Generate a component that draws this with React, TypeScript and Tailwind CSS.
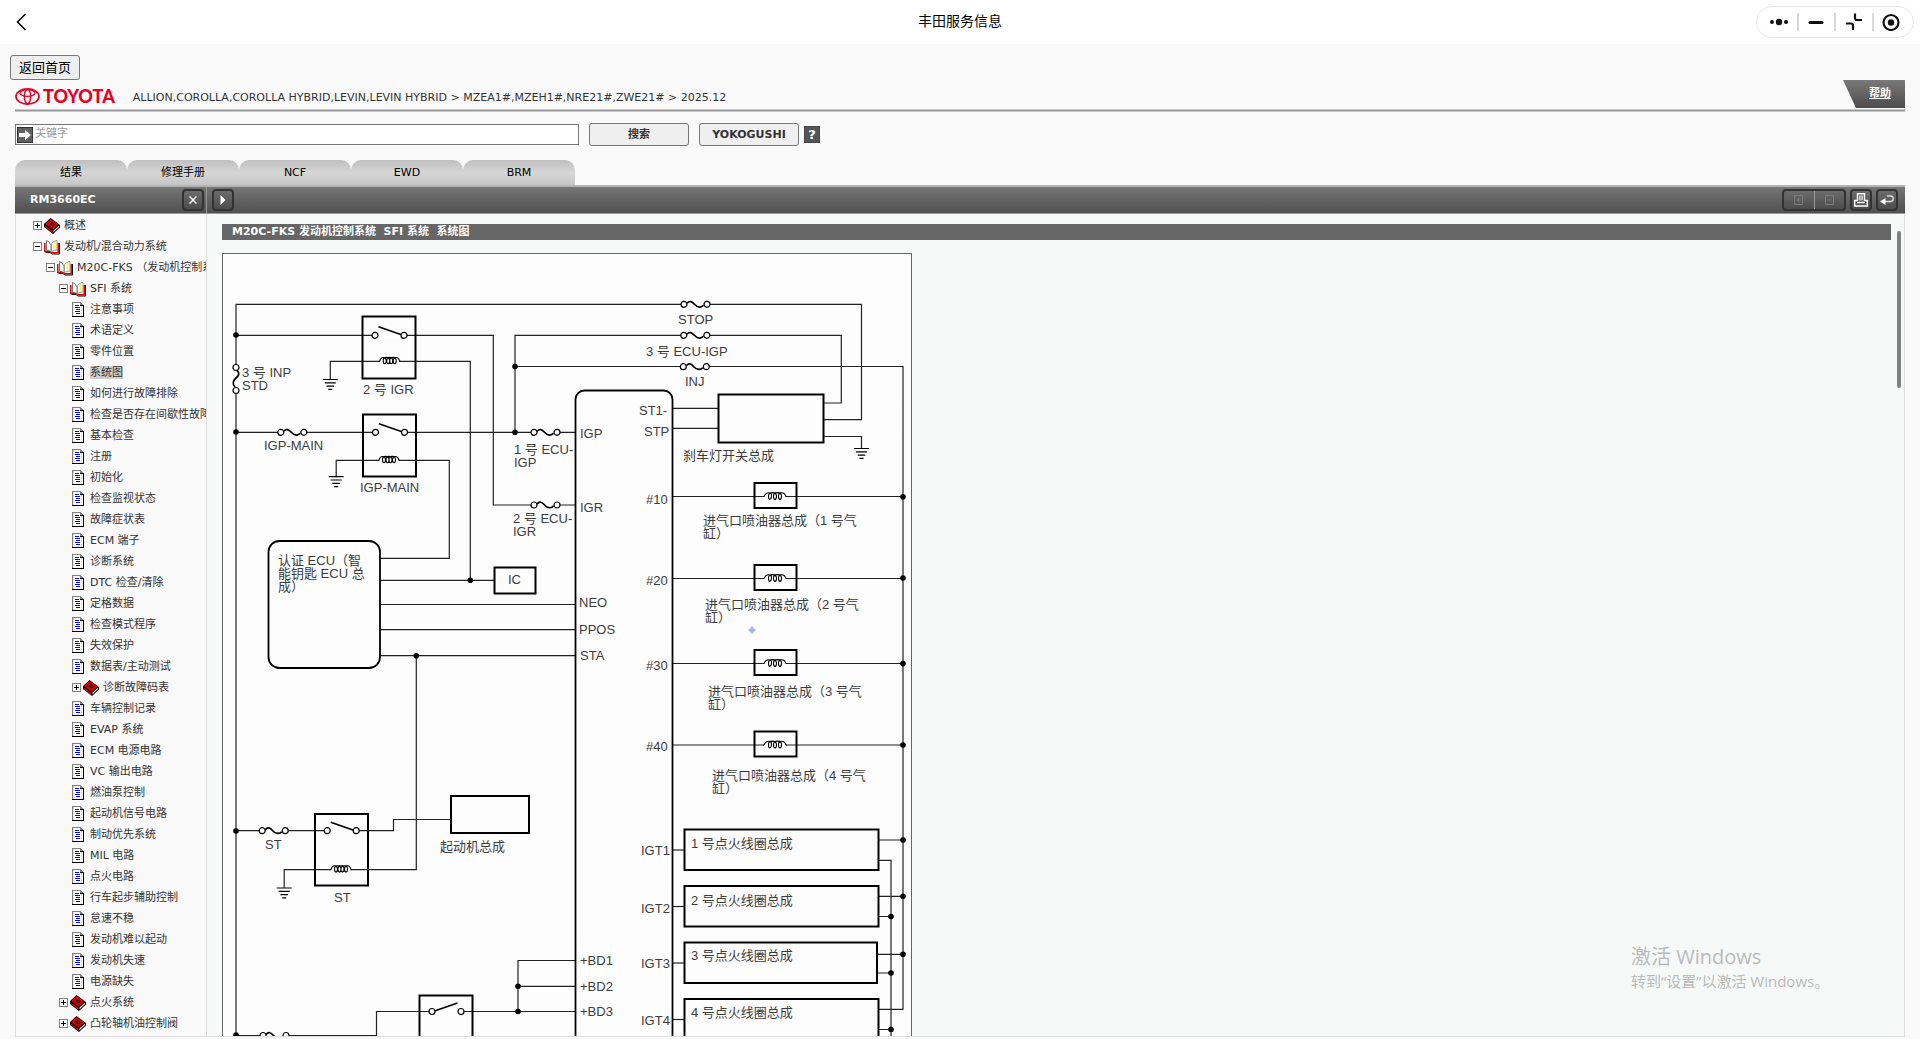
import React from "react";

type NodeKind = "closed" | "open" | "page";

interface TreeNode {
  label: string;
  kind: NodeKind;
  level: number;
  active?: boolean;
}

const page = (label: string, active = false): TreeNode => ({
  label,
  kind: "page",
  level: 3,
  active,
});

const TREE: TreeNode[] = [
  { label: "概述", kind: "closed", level: 0 },
  { label: "发动机/混合动力系统", kind: "open", level: 0 },
  { label: "M20C-FKS （发动机控制系统）", kind: "open", level: 1 },
  { label: "SFI 系统", kind: "open", level: 2 },
  page("注意事项"),
  page("术语定义"),
  page("零件位置"),
  page("系统图", true),
  page("如何进行故障排除"),
  page("检查是否存在间歇性故障"),
  page("基本检查"),
  page("注册"),
  page("初始化"),
  page("检查监视状态"),
  page("故障症状表"),
  page("ECM 端子"),
  page("诊断系统"),
  page("DTC 检查/清除"),
  page("定格数据"),
  page("检查模式程序"),
  page("失效保护"),
  page("数据表/主动测试"),
  { label: "诊断故障码表", kind: "closed", level: 3 },
  page("车辆控制记录"),
  page("EVAP 系统"),
  page("ECM 电源电路"),
  page("VC 输出电路"),
  page("燃油泵控制"),
  page("起动机信号电路"),
  page("制动优先系统"),
  page("MIL 电路"),
  page("点火电路"),
  page("行车起步辅助控制"),
  page("怠速不稳"),
  page("发动机难以起动"),
  page("发动机失速"),
  page("电源缺失"),
  { label: "点火系统", kind: "closed", level: 2 },
  { label: "凸轮轴机油控制阀", kind: "closed", level: 2 },
];

const INDENT = ["pl-[18px]", "pl-[31px]", "pl-[44px]", "pl-[57px]"];

const TABS = ["结果", "修理手册", "NCF", "EWD", "BRM"];

function ClosedBook() {
  return (
    <svg width="16" height="16" viewBox="0 0 16 16" className="shrink-0">
      <path d="M0 6L6.5 0L16 7V9.5L9 16L0 9Z" fill="#000" />
      <path d="M1 6L6.5 1L14.5 6.500L9 11.5Z" fill="#d80000" />
      <path d="M5 6L8 4L11 6.500L8.500 8.500Z" fill="#000" />
      <path d="M7.500 5.500h2v1.500h-2z" fill="#d80000" />
      <path d="M1 7.500L8.500 13V15L1 9Z" fill="#d80000" />
      <path d="M9.500 12.500L15 7.800V9L9.500 14.200Z" fill="#fff" />
    </svg>
  );
}

function OpenBook() {
  return (
    <svg width="16" height="16" viewBox="0 0 16 16" className="shrink-0">
      <path d="M1.500 13.500H6L8 15H15.500V4" fill="none" stroke="#000" />
      <path d="M0.800 4V12.500H6L8 13.800H14.200V4" fill="none" stroke="#d80000" strokeWidth="1.500" />
      <path d="M2.500 11.500V1.500L5 3L7 6V13L5 11.500Z" fill="#fff" stroke="#555" strokeWidth="0.800" />
      <path d="M7.500 12.500V4.500L9 3L12 1.500H13V11L10 11.500Z" fill="#fff" stroke="#888" strokeWidth="0.800" />
      <path d="M10.500 3.500V10.500" stroke="#f5f000" strokeWidth="2" strokeDasharray="2 1" />
    </svg>
  );
}

function PageIcon() {
  return (
    <svg width="12" height="15" viewBox="0 0 12 15" className="shrink-0" shapeRendering="crispEdges">
      <path d="M0 0H9V1H10V2H11V3H12V15H0Z" fill="#808080" />
      <path d="M1 1H8V4H11V14H1Z" fill="#fff" />
      <path d="M11 3h1v12H0v-1h11zM8 3h3v1H8z" fill="#000" />
      <path d="M1.500 1v13M9.500 4v10" stroke="#f8f000" strokeDasharray="2 1" />
      <path d="M3 3.500h4M3 5.500h5M4 7.500h4M3 9.500h5M4 11.500h4" stroke="#0000e0" />
    </svg>
  );
}

function Toggle({ open, label }: { open: boolean; label: string }) {
  return (
    <button type="button" aria-label={label} className="mr-[2px] h-[9px] w-[9px] shrink-0">
      <svg width="9" height="9" viewBox="0 0 9 9" shapeRendering="crispEdges">
        <rect x="0.5" y="0.5" width="8" height="8" fill="#fff" stroke="#808080" />
        <path d={open ? "M2 4.5h5" : "M2 4.5h5M4.5 2v5"} stroke="#000" />
      </svg>
    </button>
  );
}

function TreeRow({ node }: { node: TreeNode }) {
  return (
    <li className={"flex h-[21px] items-center whitespace-nowrap " + INDENT[node.level]}>
      {node.kind !== "page" && <Toggle open={node.kind === "open"} label={node.label} />}
      <span className={node.kind === "page" ? "mr-[6px]" : "mr-1"}>
        {node.kind === "closed" && <ClosedBook />}
        {node.kind === "open" && <OpenBook />}
        {node.kind === "page" && <PageIcon />}
      </span>
      <a href="#" className={node.active ? "bg-[#cfcfcf] leading-[13px]" : "leading-[13px]"}>
        {node.label}
      </a>
    </li>
  );
}

function TitleBar() {
  return (
    <header className="grid h-11 shrink-0 grid-cols-[1fr_auto_1fr] items-center bg-white px-[6px]">
      <button type="button" aria-label="返回" className="ml-[10px] w-3">
        <svg width="12" height="18" viewBox="0 0 12 18">
          <path d="M9.500 1L1.500 9L9.500 17" fill="none" stroke="#000" strokeWidth="1.500" />
        </svg>
      </button>
      <h1 className="pb-[2px] text-sm text-black">丰田服务信息</h1>
      <div className="flex h-8 w-[158px] items-center justify-self-end rounded-full border border-[#e8e8e8] px-1">
        <button type="button" aria-label="更多" className="flex flex-1 justify-center">
          <svg width="20" height="18" viewBox="0 0 20 18" fill="#111">
            <circle cx="3" cy="9" r="2" />
            <circle cx="10" cy="9" r="3.200" />
            <circle cx="17" cy="9" r="2" />
          </svg>
        </button>
        <span className="h-[18px] w-[2px] bg-[#d8d8d8]" />
        <button type="button" aria-label="最小化" className="flex flex-1 justify-center">
          <svg width="18" height="18" viewBox="0 0 18 18">
            <path d="M3 9.500H15" stroke="#111" strokeWidth="3" strokeLinecap="round" />
          </svg>
        </button>
        <span className="h-[18px] w-[2px] bg-[#d8d8d8]" />
        <button type="button" aria-label="退出全屏" className="flex flex-1 justify-center">
          <svg width="18" height="18" viewBox="0 0 18 18" fill="none" stroke="#111" strokeWidth="2.200">
            <path d="M10 0.500V5Q10 7 12 7H17" />
            <path d="M1 10.500H6Q8 10.500 8 12.500V17" />
          </svg>
        </button>
        <span className="h-[18px] w-[2px] bg-[#d8d8d8]" />
        <button type="button" aria-label="关闭" className="flex flex-1 justify-center">
          <svg width="18" height="18" viewBox="0 0 18 18">
            <circle cx="9" cy="9.500" r="7.500" fill="none" stroke="#111" strokeWidth="2.200" />
            <circle cx="9" cy="9.500" r="3.200" fill="#111" />
          </svg>
        </button>
      </div>
    </header>
  );
}

function Brand() {
  return (
    <div className="flex items-center gap-[3px] text-[#e60027]">
      <svg width="25" height="17" viewBox="0 0 25 17" fill="none" stroke="currentColor">
        <ellipse cx="12.500" cy="8.500" rx="11.500" ry="7.600" strokeWidth="1.700" />
        <ellipse cx="12.500" cy="5" rx="7.500" ry="3.300" strokeWidth="1.300" />
        <ellipse cx="12.500" cy="8.500" rx="3.200" ry="7.200" strokeWidth="1.400" />
      </svg>
      <span className="font-['Lato'] text-lg leading-none font-black">TOYOTA</span>
    </div>
  );
}

function BarButton({ label, children }: { label: string; children: React.ReactNode }) {
  return (
    <button
      type="button"
      aria-label={label}
      className="flex h-[22px] w-[22px] items-center justify-center rounded border-2 border-[#333] bg-linear-to-b from-[#6c6c6c] to-[#4c4c4c]"
    >
      {children}
    </button>
  );
}

function Fuse({ x, y, vertical = false }: { x: number; y: number; vertical?: boolean }) {
  return (
    <g transform={`translate(${x} ${y})${vertical ? " rotate(90)" : ""}`}>
      <path d="M-11.500 0H11.500" stroke="#fff" strokeWidth="3" />
      <path d="M-8.500 -1C-6 -4 -3.500 -3 -1 0C2 3.500 6 3.500 8 1" fill="none" strokeWidth="1.700" />
      <circle cx="-11.500" cy="0" r="3" fill="#fff" strokeWidth="1.200" />
      <circle cx="11.500" cy="0" r="3" fill="#fff" strokeWidth="1.200" />
    </g>
  );
}

function Coil({ x, y }: { x: number; y: number }) {
  return (
    <g transform={`translate(${x} ${y})`}>
      <path d="M-10 0H10" stroke="#fff" strokeWidth="3" />
      <path
        d="M-11 0H-10C-9 -5 -3.500 -5 -3.500 -0.500C-3.500 3.500 -6.500 3.500 -6.500 -0.500C-6.500 -5 0 -5 0 -0.500C0 3.500 -3 3.500 -3 -0.500C-3 -5 3 -5 3 -0.500C3 3.500 0 3.500 0 -0.500C0 -5 6.500 -5 6.500 -0.500C6.500 3.500 3.500 3.500 3.500 -0.500C3.500 -5 9 -5 10 0H11"
        fill="none"
        strokeWidth="1.100"
      />
    </g>
  );
}

// wider winding with three loops, used inside the injectors
function InjectorCoil({ x, y }: { x: number; y: number }) {
  return (
    <g transform={`translate(${x} ${y})`}>
      <path d="M-11 0H11" stroke="#fff" strokeWidth="3" />
      <path
        d="M-12 0H-11C-9 -5 -3 -5 -3.500 -0.500C-4 4 -6.500 4 -6.500 -0.500C-6.500 -5 1.500 -5 1.500 -0.500C1.500 4 -1.500 4 -1.500 -0.500C-1.500 -5 6.500 -5 6.500 -0.500C6.500 4 3.500 4 3.500 -0.500C3.500 -5 9.500 -5 11 0H12"
        fill="none"
        strokeWidth="1.100"
      />
    </g>
  );
}

function Switch({ x, y, flip = false }: { x: number; y: number; flip?: boolean }) {
  return (
    <g transform={`translate(${x} ${y})${flip ? " scale(-1 1)" : ""}`}>
      <path d="M-14.500 0H14.500" stroke="#fff" strokeWidth="3" />
      <path d="M-11 -8.500L12 -0.500" strokeWidth="1.700" />
      <circle cx="-14.500" cy="0" r="3" fill="#fff" strokeWidth="1.200" />
      <circle cx="14.500" cy="0" r="3" fill="#fff" strokeWidth="1.200" />
    </g>
  );
}

function Ground({ x, y }: { x: number; y: number }) {
  return (
    <path
      transform={`translate(${x} ${y})`}
      d="M-7.500 0H7.500M-5.500 3.300H5.500M-3.800 6.600H3.800M-2 9.900H2"
      strokeWidth="1.200"
    />
  );
}

const DOTS = [
  [236, 335], [236, 432], [236, 831], [236, 1035],
  [515, 366.5], [515, 432.3], [470.3, 580.3], [416.3, 655.7],
  [903, 496.7], [903, 578], [903, 663.6], [903, 745],
  [903, 840], [903, 896.3], [903, 954.3],
  [891, 916.5], [891, 973], [891, 1029.5],
  [518, 986.3], [518, 1011.5],
];

const INJECTORS = [
  { pin: "#10", no: 1, y: 496.5, pinY: 504, x: 703, textY: 525 },
  { pin: "#20", no: 2, y: 578.5, pinY: 585, x: 705, textY: 609 },
  { pin: "#30", no: 3, y: 663.5, pinY: 670, x: 708, textY: 696 },
  { pin: "#40", no: 4, y: 745, pinY: 751, x: 712, textY: 780 },
];

const IGNITION = [
  { no: 1, y: 829.5, pinY: 855, textY: 848 },
  { no: 2, y: 886, pinY: 913, textY: 905 },
  { no: 3, y: 942.5, pinY: 968, textY: 960 },
  { no: 4, y: 999, pinY: 1025, textY: 1017 },
];

const LABELS: [number, number, string][] = [
  [242, 377, "3 号 INP"], [242, 390, "STD"], [363, 394, "2 号 IGR"],
  [264, 450, "IGP-MAIN"], [360, 492, "IGP-MAIN"],
  [514, 454, "1 号 ECU-"], [514, 467, "IGP"],
  [513, 523, "2 号 ECU-"], [513, 536, "IGR"],
  [678, 324, "STOP"], [646, 356, "3 号 ECU-IGP"], [685, 386, "INJ"],
  [639, 415, "ST1-"], [644, 436, "STP"], [683, 460, "刹车灯开关总成"],
  [580, 438, "IGP"], [580, 512, "IGR"],
  [278, 565, "认证 ECU（智"], [278, 578, "能钥匙 ECU 总"], [278, 591, "成）"],
  [508, 584, "IC"], [579, 607, "NEO"], [579, 634, "PPOS"], [580, 660, "STA"],
  [265, 849, "ST"], [334, 902, "ST"], [440, 851, "起动机总成"],
  [580, 965, "+BD1"], [580, 991, "+BD2"], [580, 1016, "+BD3"],
];

function Diagram() {
  return (
    <svg
      width="690"
      height="880"
      viewBox="222 253 690 880"
      role="img"
      aria-label="系统图"
      className="mt-[13px] shrink-0 bg-[#fdfdfd]"
    >
      <rect x="222.5" y="253.5" width="689" height="879" fill="none" stroke="#666" />
      <g fill="none" stroke="#222" strokeWidth="1.200">
        <path d="M236 1133V304.300H861.500V419.700H824" />
        <path d="M236 335.300H493.300V505H575" />
        <path d="M330.300 379.500V361.300H470.300V580.300" />
        <path d="M236 432.300H575" />
        <path d="M336.200 476.700V460.300H449.300V558.300H380" />
        <path d="M515 432.300V335.300H841.300V403H824M515 366.500H903V1009.300H878" />
        <path d="M380 580.300H494M380 604.500H575M380 629.700H575M380 655.700H575" />
        <path d="M672 408.300H718M672 428.300H718M824 436.500H861.500V448.500" />
        <path d="M236 830.700H393.500V819.500H451M284.200 888V869.600H416.300V655.700" />
        <path d="M236 1035.500H376.500V1011.500H575M575 960.500H518V1011.500M518 986.300H575" />
        <path d="M878 860.300H891V1133M878 840H903M878 896.300H903M878 954.300H903M878 916.500H891M878 973H891M878 1029.500H891" />
        {INJECTORS.map(({ pin, y }) => (
          <path key={pin} d={`M672 ${y}H903`} />
        ))}
        {IGNITION.map(({ no, y }) => (
          <path key={no} d={`M672 ${y + 20.5}H684`} />
        ))}
      </g>
      <g fill="none" stroke="#000" strokeWidth="2">
        <rect x="362.500" y="316.500" width="53" height="62" />
        <rect x="363" y="414.500" width="53" height="62" />
        <rect x="268.500" y="541" width="111.500" height="127" rx="11" strokeWidth="1.800" />
        <rect x="494.500" y="567.500" width="41" height="26" />
        <rect x="575.500" y="390.500" width="97" height="800" rx="9" strokeWidth="1.800" />
        <rect x="718.500" y="394.500" width="105" height="48" />
        <rect x="315" y="814" width="53" height="71.500" />
        <rect x="451" y="796" width="78" height="37" />
        <rect x="419.500" y="995.500" width="53" height="62" />
        {INJECTORS.map(({ pin, y }) => (
          <rect key={pin} x="754.500" y={y - 13.5} width="42" height="25" />
        ))}
        {IGNITION.map(({ no, y }) => (
          <rect key={no} x="684.500" y={y} width={no === 3 ? 192.5 : 194} height="40.500" />
        ))}
      </g>
      <g stroke="#000">
        <Fuse x={236} y={379} vertical />
        <Fuse x={292.3} y={432.3} />
        <Fuse x={695.5} y={304.3} />
        <Fuse x={695.3} y={335.3} />
        <Fuse x={694.8} y={366.7} />
        <Fuse x={545.5} y={432.3} />
        <Fuse x={545.5} y={505} />
        <Fuse x={273.7} y={830.7} />
        <Fuse x={274.5} y={1035.5} />
        <Switch x={389.5} y={335.3} />
        <Switch x={390} y={432.3} />
        <Switch x={341.7} y={830.7} />
        <Switch x={446.5} y={1011.5} flip />
        <Coil x={389.7} y={361.3} />
        <Coil x={389} y={460.3} />
        <Coil x={341} y={869.6} />
        {INJECTORS.map(({ pin, y }) => (
          <InjectorCoil key={pin} x={775} y={y} />
        ))}
        <Ground x={330.3} y={379.5} />
        <Ground x={336.2} y={476.7} />
        <Ground x={861.5} y={448.5} />
        <Ground x={284.2} y={888} />
      </g>
      {DOTS.map(([x, y]) => (
        <circle key={`${x}-${y}`} cx={x} cy={y} r="2.800" fill="#000" />
      ))}
      <path d="M752 626.500L753.500 628.500L755.500 630L753.500 631.500L752 633.500L750.500 631.500L748.500 630L750.500 628.500Z" fill="#9fb4ff" stroke="#9fb4ff" />
      <g className="font-['Liberation_Sans','Noto_Sans_CJK_SC',sans-serif] text-[13px]" fill="#3c3c3c">
        {LABELS.map(([x, y, text]) => (
          <text key={`${x}-${y}`} x={x} y={y}>
            {text}
          </text>
        ))}
        {INJECTORS.map(({ pin, no, pinY, x, textY }) => (
          <React.Fragment key={pin}>
            <text x="646" y={pinY}>{pin}</text>
            <text x={x} y={textY}>{`进气口喷油器总成（${no} 号气`}</text>
            <text x={x} y={textY + 13}>缸）</text>
          </React.Fragment>
        ))}
        {IGNITION.map(({ no, pinY, textY }) => (
          <React.Fragment key={no}>
            <text x="641" y={pinY}>{`IGT${no}`}</text>
            <text x="691" y={textY}>{`${no} 号点火线圈总成`}</text>
          </React.Fragment>
        ))}
      </g>
    </svg>
  );
}

function App() {
  return (
    <div className="relative flex h-screen flex-col overflow-hidden bg-[#f9f9f9] font-['DejaVu_Sans','Noto_Sans_CJK_SC',sans-serif] text-[11px] text-[#333]">
      <TitleBar />

      <div className="pl-[10px] pt-[11px]">
        <button
          type="button"
          className="block h-[25px] rounded-[3px] border border-[#777] bg-[#efefef] px-2 text-[13px] leading-none text-black"
        >
          返回首页
        </button>
      </div>

      <main className="flex min-h-0 flex-1 flex-col px-[15px] pb-[2px]">
        <div className="flex h-[29px] shrink-0 items-start justify-between">
          <div className="flex items-center gap-[18px] pt-[6px]">
            <Brand />
            <p className="pt-1 whitespace-nowrap">
              ALLION,COROLLA,COROLLA HYBRID,LEVIN,LEVIN HYBRID &gt; MZEA1#,MZEH1#,NRE21#,ZWE21# &gt; 2025.12
            </p>
          </div>
          <a
            href="#"
            className="flex h-[28px] w-[62px] items-center justify-end bg-linear-to-b from-[#7a7a7a] to-[#4c4c4c] pr-[14px] font-bold text-white underline [clip-path:polygon(0_0,100%_0,100%_100%,13px_100%)]"
          >
            帮助
          </a>
        </div>
        <div className="h-[3px] shrink-0 border-y border-[#c8c8c8] bg-[#999]" />

        <form className="mt-[11px] flex shrink-0 items-center" onSubmit={(e) => e.preventDefault()}>
          <div className="flex h-[21px] w-[564px] items-center gap-[2px] border border-[#777] bg-white pl-px">
            <label htmlFor="keyword" aria-label="关键字" className="flex h-4 w-4 items-center justify-center border border-[#333] bg-[#606060]">
              <svg width="12" height="10" viewBox="0 0 12 10">
                <path d="M0 3H6V0L12 5L6 10V7H0Z" fill="#fff" />
              </svg>
            </label>
            <input
              id="keyword"
              type="text"
              placeholder="关键字"
              className="min-w-0 flex-1 outline-none placeholder:text-[#999]"
            />
          </div>
          <button type="submit" className="ml-[10px] h-[23px] w-[100px] rounded-[3px] border border-[#777] bg-[#efefef] pt-[2px] font-bold">
            搜索
          </button>
          <button type="button" className="ml-[10px] h-[23px] w-[100px] rounded-[3px] border border-[#777] bg-[#efefef] pt-[2px] font-bold">
            YOKOGUSHI
          </button>
          <button
            type="button"
            className="ml-[5px] h-[17px] w-4 border border-[#444] bg-[#555] text-[13px] leading-none font-bold text-white"
          >
            ?
          </button>
        </form>

        <nav className="mt-[14px] flex shrink-0">
          {TABS.map((tab) => (
            <a
              key={tab}
              href="#"
              className="flex h-[25px] w-28 items-center justify-center rounded-t-[10px] bg-linear-to-b from-[#bfbfbf] via-[#d6d6d6] to-[#c6c6c6] pt-[2px] text-black"
            >
              {tab}
            </a>
          ))}
        </nav>

        <div className="flex h-[29px] shrink-0 items-center border-t-2 border-b border-t-[#b4b4b4] border-b-[#999] bg-linear-to-b from-[#767676] to-[#505050]">
          <div className="flex h-full w-48 items-center justify-between border-r border-[#999] pr-[2px] pl-[15px]">
            <h2 className="font-bold text-white">RM3660EC</h2>
            <BarButton label="关闭目录">
              <svg width="8" height="8" viewBox="0 0 8 8">
                <path d="M0.500 0.500L7.500 7.500M7.500 0.500L0.500 7.500" stroke="#fff" strokeWidth="1.500" />
              </svg>
            </BarButton>
          </div>
          <div className="flex flex-1 items-center justify-between pr-[7px] pl-[5px]">
            <BarButton label="展开">
              <svg width="6" height="10" viewBox="0 0 6 10">
                <path d="M0.500 0L5.500 5L0.500 10Z" fill="#fff" />
              </svg>
            </BarButton>
            <div className="flex gap-1">
              <div className="flex h-[22px] w-16 divide-x divide-[#999] rounded border-2 border-[#333] bg-linear-to-b from-[#6c6c6c] to-[#4c4c4c]">
                <button type="button" aria-label="全部展开" className="flex flex-1 items-center justify-center">
                  <svg width="9" height="10" viewBox="0 0 9 10" fill="none" stroke="#7c7c7c">
                    <path d="M0.500 0.500H8.500V9.500H0.500ZM2.500 5H6.500M4.500 3V7" />
                  </svg>
                </button>
                <button type="button" aria-label="全部折叠" className="flex flex-1 items-center justify-center">
                  <svg width="9" height="10" viewBox="0 0 9 10" fill="none" stroke="#7c7c7c">
                    <path d="M0.500 0.500H8.500V9.500H0.500ZM2.500 5H6.500" />
                  </svg>
                </button>
              </div>
              <BarButton label="打印">
                <svg width="14" height="14" viewBox="0 0 14 14" fill="none" stroke="#fff">
                  <path d="M3.500 8V0.700H10.500V8" strokeWidth="1.400" />
                  <path d="M5.500 3H8.500V7H5.500Z" fill="#aaa" stroke="#ccc" />
                  <path d="M3 7.500H0.700V13H13.300V7.500H11M3 9.500H11" strokeWidth="1.400" />
                </svg>
              </BarButton>
              <BarButton label="返回上一页">
                <svg width="14" height="10" viewBox="0 0 14 10" fill="none">
                  <path d="M7 1H10.500Q13.200 1 13.200 3.800Q13.200 6.500 10.500 6.500H5" stroke="#ddd" strokeWidth="1.300" />
                  <path d="M0 6.500L5.500 3V10Z" fill="#fff" />
                </svg>
              </BarButton>
            </div>
          </div>
        </div>

        <div className="flex min-h-0 flex-1 border-b border-[#ddd]">
          <aside className="w-48 shrink-0 overflow-hidden border-x border-[#ddd]">
            <ul className="-ml-px pt-px">
              {TREE.map((node) => (
                <TreeRow key={node.label} node={node} />
              ))}
            </ul>
          </aside>
          <section className="flex min-w-0 flex-1 overflow-hidden border-r border-[#ddd] bg-[#f7f9f8]">
            <article className="flex min-w-0 flex-1 flex-col items-start pt-[10px] pl-[15px]">
              <h3 className="h-4 w-full shrink-0 bg-[#666] pl-[10px] leading-4 font-bold whitespace-pre text-white">
                M20C-FKS 发动机控制系统  SFI 系统  系统图
              </h3>
              <Diagram />
            </article>
            <div className="w-[13px] shrink-0 pt-[17px] pl-[6px]">
              <div className="h-[157px] w-1 rounded-full bg-[#808080]" />
            </div>
          </section>
        </div>
      </main>

      <div className="pointer-events-none absolute right-[85px] bottom-[46px] w-[204px] font-['Open_Sans','Noto_Sans_CJK_SC',sans-serif] text-[#b9bbbb]">
        <p className="text-xl leading-6">激活 Windows</p>
        <p className="text-[15px] leading-6 whitespace-nowrap">转到“设置”以激活 Windows。</p>
      </div>
    </div>
  );
}

export default App;
